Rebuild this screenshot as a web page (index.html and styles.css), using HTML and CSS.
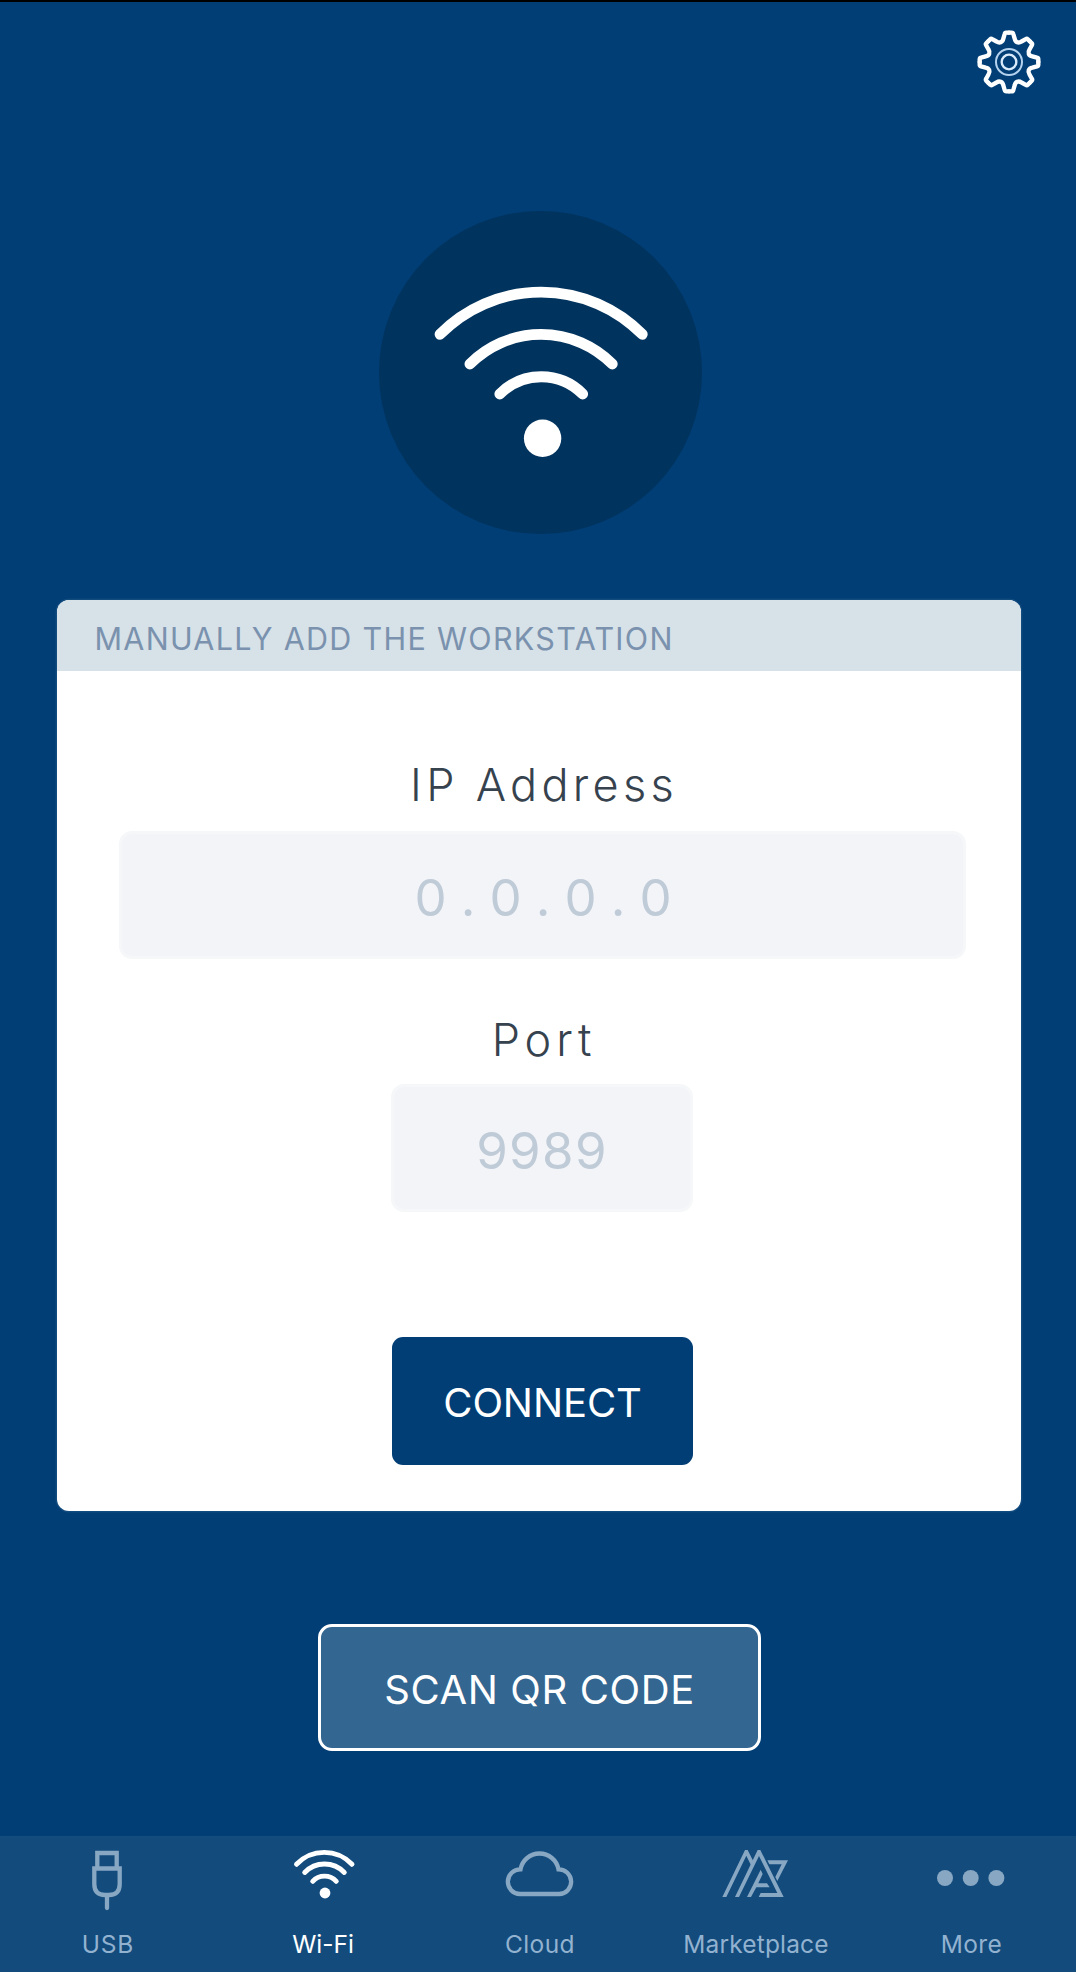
FILE: index.html
```
<!DOCTYPE html>
<html lang="en">
<head>
<meta charset="utf-8">
<title>Wi-Fi connection</title>
<link rel="stylesheet" href="styles.css">
</head>
<body>
<div class="screen">
  <header class="topbar">
    <svg class="gear" viewBox="-99 -99 198 198" aria-label="Settings">
      <defs>
        <path id="tooth" d="M0 -88H8Q12 -88 13 -84L17 -70C19 -59 28.3 -55.2 37.5 -61.5L50.2 -68.6Q53.7 -71 56.6 -67.9L62.2 -62.2"/>
      </defs>
      <g class="gear-rim">
        <use href="#tooth"/>
        <use href="#tooth" transform="rotate(45)"/>
        <use href="#tooth" transform="rotate(90)"/>
        <use href="#tooth" transform="rotate(135)"/>
        <use href="#tooth" transform="rotate(180)"/>
        <use href="#tooth" transform="rotate(225)"/>
        <use href="#tooth" transform="rotate(270)"/>
        <use href="#tooth" transform="rotate(315)"/>
      </g>
      <circle class="gear-ring" r="39"/>
      <circle class="gear-hub" r="22"/>
    </svg>
  </header>

  <main class="content">
    <div class="hero">
      <svg class="hero-icon" viewBox="379 211 323 323" aria-hidden="true">
        <g class="hero-arcs">
          <path d="M440 334.3A142.2 142.2 0 0 1 642.3 334.3"/>
          <path d="M469.9 364A100.4 100.4 0 0 1 612.3 364"/>
          <path d="M499.8 394A58.4 58.4 0 0 1 582.7 394"/>
        </g>
        <circle class="hero-dot" cx="542.6" cy="438.3" r="18.7"/>
      </svg>
    </div>

    <section class="card">
      <h1 class="card-title">MANUALLY ADD THE WORKSTATION</h1>
      <div class="card-body">
        <div class="label">IP Address</div>
        <div class="field field-ip">0 . 0 . 0 . 0</div>
        <div class="label label-port">Port</div>
        <div class="field field-port">9989</div>
        <button class="connect">CONNECT</button>
      </div>
    </section>

    <button class="scan">SCAN QR CODE</button>
  </main>

  <nav class="tabs">
    <div class="tab">
      <svg class="tab-icon" viewBox="0 0 100 93">
        <path d="M39.3 32V17H58.7V32M36.3 32.5H61.7V48Q61.7 59 51 59H47Q36.3 59 36.3 48ZM49 59V72"/>
      </svg>
      <span class="tab-label usb">USB</span>
    </div>
    <div class="tab active">
      <svg class="tab-icon" viewBox="0 0 100 93">
        <path d="M22.5 28.3A38.2 38.2 0 0 1 78 28.3M30.7 36.5A27.3 27.3 0 0 1 70.3 36.5M38.7 45.3A16 16 0 0 1 62.3 45.3"/>
        <circle class="solid" cx="51" cy="57" r="5.4"/>
      </svg>
      <span class="tab-label wifi">Wi-Fi</span>
    </div>
    <div class="tab">
      <svg class="tab-icon" viewBox="0 0 100 93">
        <path d="M30.5 33.4A19.3 19.3 0 0 1 68.5 33.4A12.3 12.3 0 0 1 69.2 58H29.8A12.3 12.3 0 0 1 30.5 33.4Z"/>
      </svg>
      <span class="tab-label cloud">Cloud</span>
    </div>
    <div class="tab">
      <svg class="tab-icon" viewBox="0 0 100 93">
        <g class="market" transform="translate(-246 -16) scale(.33333)">
          <path class="solid" d="M787 231L855 90H863L883 130L876 142L859 107L799 231Z"/>
          <path class="solid" d="M825 231L893 90H901L971 231H896L902 219H952L897 108L837 231Z"/>
          <path class="solid" d="M861 231L902 149L908 162L895 190H921L929 202H889L873 231Z"/>
          <path class="solid" d="M922 121H984L952 183L946 171L965 133H928Z"/>
        </g>
      </svg>
      <span class="tab-label">Marketplace</span>
    </div>
    <div class="tab more">
      <svg class="tab-icon" viewBox="0 0 100 93">
        <circle class="solid" cx="23" cy="42" r="8"/>
        <circle class="solid" cx="48.7" cy="42" r="8"/>
        <circle class="solid" cx="74.4" cy="42" r="8"/>
      </svg>
      <span class="tab-label cloud">More</span>
    </div>
  </nav>
</div>
</body>
</html>
```
FILE: styles.css
```
* { box-sizing: border-box; }

body {
  margin: 0;
  background: #003e75;
  font-family: Inter, "Liberation Sans", sans-serif;
}

.screen {
  display: flex;
  flex-direction: column;
  width: 1076px;
  height: 1972px;
  border-top: 2px solid #000;
  overflow: hidden;
}

.topbar {
  display: flex;
  justify-content: flex-end;
  height: 209px;
  padding: 27px 34.5px 0 0;
}

.gear { width: 66px; height: 66px; }
.gear-rim { fill: none; stroke: #fff; stroke-width: 13; stroke-linecap: round; stroke-linejoin: round; }
.gear-ring { fill: none; stroke: #b5d3ee; stroke-width: 6; }
.gear-hub { fill: none; stroke: #d9eafa; stroke-width: 7; }

.content {
  display: flex;
  flex: 1;
  flex-direction: column;
  align-items: center;
}

.hero {
  width: 323px;
  height: 323px;
  margin-left: 4px;
  border-radius: 50%;
  background: #00335d;
}
.hero-icon { display: block; width: 100%; height: 100%; }
.hero-arcs { fill: none; stroke: #fff; stroke-width: 10.8; stroke-linecap: round; }
.hero-dot { fill: #fff; }

.card {
  width: 964px;
  height: 911px;
  margin-top: 66px;
  margin-left: 2px;
  border-radius: 12px;
  background: #fff;
  box-shadow: 0 0 0 1.5px rgba(255, 255, 255, .07);
  overflow: hidden;
}

.card-title {
  height: 71px;
  margin: 0;
  padding: 5px 0 0 37.5px;
  background: #d7e1e8;
  color: #7a92ae;
  font-size: 30.5px;
  font-weight: 400;
  line-height: 67px;
  letter-spacing: 1.3px;
}

.card-body {
  display: flex;
  flex-direction: column;
  align-items: center;
  padding: 84px 56px 0 62px;
}

.label {
  padding-left: 4px;
  color: #36424e;
  font-size: 45px;
  font-weight: 300;
  line-height: 60px;
  letter-spacing: 4.3px;
}
.label-port { margin-top: 51px; letter-spacing: 4.9px; }

.field {
  height: 128px;
  border: 3px solid #f5f7f9;
  border-radius: 13px;
  background: #f2f4f8;
  color: #c0cbd8;
  font-size: 51px;
  line-height: 122px;
  padding-top: 3px;
  text-align: center;
}
.field-ip { width: 847px; margin-top: 16px; padding-left: 2px; letter-spacing: -.14px; white-space: pre; }
.field-port { width: 302px; margin-top: 14px; letter-spacing: 1.3px; }

.connect, .scan {
  color: #fff;
  font-family: inherit;
  font-size: 40px;
  font-weight: 400;
}

.connect {
  width: 301px;
  height: 128px;
  margin-top: 125px;
  padding: 3px 0 0 1px;
  border: 0;
  border-radius: 11px;
  background: #003e75;
  letter-spacing: -.1px;
}

.scan {
  width: 443px;
  height: 127px;
  margin-top: 113px;
  margin-left: 3px;
  padding: 4px 0 0;
  border: 3px solid #fff;
  border-radius: 14px;
  background: #336690;
  letter-spacing: .6px;
}

.tabs {
  display: grid;
  grid-template-columns: repeat(4, 216px) 1fr;
  height: 136px;
  background: #124b7c;
}

.tab {
  display: flex;
  flex-direction: column;
  align-items: center;
  color: #92b2d0;
}
.tab.more { padding-left: 3px; }
.tab-icon {
  width: 100px;
  height: 93px;
  fill: none;
  stroke: #88a7c3;
  stroke-width: 4.3;
  stroke-linecap: round;
}
.tab-icon .solid { fill: #88a7c3; stroke: none; }
.active { color: #fff; }
.active .tab-icon { stroke: #fff; stroke-width: 4.9; }
.active .tab-icon .solid { fill: #fff; }

.tab-label { font-size: 24.5px; line-height: 30px; letter-spacing: .16px; }
.usb { letter-spacing: .77px; }
.wifi { padding-right: 2px; letter-spacing: 0; }
.cloud { letter-spacing: .4px; }
```
